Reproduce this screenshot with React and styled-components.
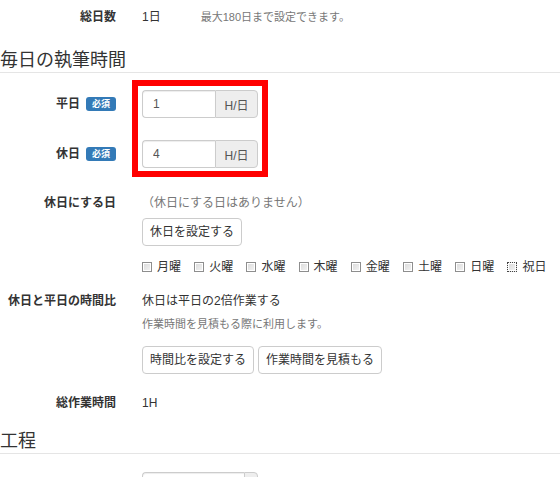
import React from 'react'
import styled, { createGlobalStyle } from 'styled-components'

const GlobalStyle = createGlobalStyle`
  body {
    margin: 0;
    background: #fff;
    color: #333;
    font-family: "Liberation Sans", "Noto Sans CJK JP", sans-serif;
    font-size: 12px;
  }
`

const Page = styled.div`
  width: 560px;
  height: 477px;
  overflow: hidden;
`

const Row = styled.div`
  display: grid;
  grid-template-columns: 116px 1fr;
  column-gap: 26px;
  align-items: ${p => (p.$center ? 'center' : 'start')};
  margin-top: ${p => p.$top || 0}px;
`

const Label = styled.div`
  display: flex;
  justify-content: flex-end;
  align-items: center;
  gap: 6px;
  font-weight: bold;
  line-height: 20px;
  white-space: nowrap;
`

const Content = styled.div`
  display: flex;
  flex-direction: column;
  align-items: flex-start;
`

const Line = styled.div`
  display: flex;
  align-items: center;
  gap: ${p => p.$gap || 0}px;
  line-height: 20px;
  margin-top: ${p => p.$top || 0}px;
`

const Help = styled.span`
  color: #777;
  font-size: 11px;
  line-height: 18px;
  margin-top: ${p => p.$top || 0}px;
`

const Note = styled.span`
  color: #777;
  font-size: 12px;
  line-height: 20px;
`

const Heading = styled.h2`
  margin: ${p => p.$top}px 0 0;
  font-size: 18px;
  font-weight: normal;
  line-height: 24px;
  color: #333;
  border-bottom: 1px solid #e5e5e5;
`

const Badge = styled.span`
  display: inline-flex;
  align-items: center;
  justify-content: center;
  width: 30px;
  height: 14px;
  border-radius: 3px;
  background: #337ab7;
  color: #fff;
  font-size: 9px;
  font-weight: bold;
  line-height: 1;
`

const Highlighted = styled.div`
  position: relative;
  display: flex;
  flex-direction: column;
  gap: 22px;
  padding-top: 17px;
`

const Marker = styled.div`
  position: absolute;
  left: 132px;
  top: 7px;
  width: 136px;
  height: 97px;
  box-sizing: border-box;
  border: 6px solid #ff0000;
  pointer-events: none;
`

const InputGroup = styled.div`
  display: flex;
  width: 116px;
  height: 28px;
`

const TextInput = styled.input`
  box-sizing: border-box;
  width: ${p => p.$width || 73}px;
  height: 28px;
  padding: 0 10px;
  border: 1px solid #ccc;
  border-right: none;
  border-radius: 4px 0 0 4px;
  font: inherit;
  font-size: 12px;
  color: #555;
  outline: none;
  box-shadow: inset 0 1px 1px rgba(0, 0, 0, 0.075);
`

const Addon = styled.span`
  flex: 1;
  display: flex;
  align-items: center;
  justify-content: center;
  box-sizing: border-box;
  background: #eee;
  border: 1px solid #ccc;
  border-radius: 0 4px 4px 0;
  color: #555;
  font-size: 12px;
`

const Button = styled.button`
  box-sizing: border-box;
  height: 28px;
  padding: 0 7px;
  background: #fff;
  border: 1px solid #ccc;
  border-radius: 4px;
  color: #333;
  font: inherit;
  font-size: 12px;
  cursor: pointer;
`

const DayList = styled.div`
  display: flex;
  gap: 13.2px;
  margin-top: 11px;
  line-height: 20px;
`

const Day = styled.label`
  display: flex;
  align-items: center;
  gap: 5px;
  white-space: nowrap;
`

const Box = styled.input`
  appearance: none;
  margin: 0;
  width: 10px;
  height: 10px;
  box-sizing: border-box;
  border: 1px ${p => (p.$focus ? 'dotted #444' : 'solid #8e8e8e')};
  background: linear-gradient(135deg, #d9d9d9, #f4f4f4);
  box-shadow: inset 0 0 0 1px #fff;
`

const days = ['月曜', '火曜', '水曜', '木曜', '金曜', '土曜', '日曜', '祝日']

export default function App() {
  return (
    <Page>
      <GlobalStyle />
      <Row $top={7}>
        <Label>総日数</Label>
        <Line $gap={40}>
          <span>1日</span>
          <Help>最大180日まで設定できます。</Help>
        </Line>
      </Row>

      <Heading $top={21}>毎日の執筆時間</Heading>

      <Highlighted>
        <Row $center>
          <Label>平日<Badge>必須</Badge></Label>
          <InputGroup>
            <TextInput defaultValue="1" />
            <Addon>H/日</Addon>
          </InputGroup>
        </Row>
        <Row $center>
          <Label>休日<Badge>必須</Badge></Label>
          <InputGroup>
            <TextInput defaultValue="4" />
            <Addon>H/日</Addon>
          </InputGroup>
        </Row>
        <Marker />
      </Highlighted>

      <Row $top={25}>
        <Label>休日にする日</Label>
        <Content>
          <Note>（休日にする日はありません）</Note>
          <Line $top={5}><Button>休日を設定する</Button></Line>
          <DayList>
            {days.map(d => (
              <Day key={d}>
                <Box type="checkbox" $focus={d === '祝日'} />
                {d}
              </Day>
            ))}
          </DayList>
        </Content>
      </Row>

      <Row $top={14}>
        <Label>休日と平日の時間比</Label>
        <Content>
          <Line>休日は平日の2倍作業する</Line>
          <Help $top={4}>作業時間を見積もる際に利用します。</Help>
          <Line $top={13} $gap={4}>
            <Button>時間比を設定する</Button>
            <Button>作業時間を見積もる</Button>
          </Line>
        </Content>
      </Row>

      <Row $top={19}>
        <Label>総作業時間</Label>
        <Line>1H</Line>
      </Row>

      <Heading $top={16}>工程</Heading>

      <Row $top={18}>
        <span />
        <InputGroup>
          <TextInput $width={102} />
          <Addon />
        </InputGroup>
      </Row>
    </Page>
  )
}
